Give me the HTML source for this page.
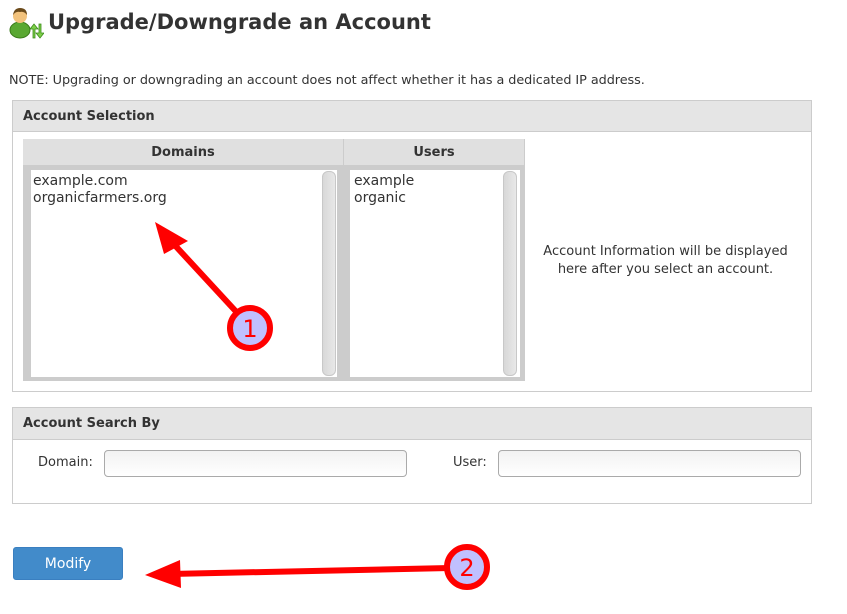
<!DOCTYPE html>
<html><head><meta charset="utf-8"><style>
*{box-sizing:border-box;margin:0;padding:0}
body{width:847px;height:614px;background:#fff;font-family:"DejaVu Sans","Liberation Sans",sans-serif;color:#333;position:relative;overflow:hidden}
.a{position:absolute}
.t{white-space:nowrap}
.panel{border:1px solid #ccc;background:#fff}
.ph{background:#e5e5e5;border-bottom:1px solid #ccc;font-weight:bold;font-size:13px;padding-left:10px}
.inp{border:1px solid #aaa;border-radius:4px;background:linear-gradient(#f2f2f2,#fff)}
.sb{background:linear-gradient(90deg,#d8d8d8,#e8e8e8);border:1px solid #c8c8c8;border-radius:6px}
</style></head><body>
<svg class="a" style="left:8px;top:6px" width="36" height="34" viewBox="0 0 36 34">
<ellipse cx="12" cy="24" rx="10" ry="8" fill="#5aa832" stroke="#3a7a1a"/>
<circle cx="12" cy="10" r="7" fill="#f2c27c"/>
<path d="M5 9 Q6 2 12 2 Q19 2 19 9 Q16 5 12 6 Q8 5 5 9Z" fill="#6b4a1a"/>
<path d="M25 32 V23 H22 L26 18 L30 23 H27 V32Z" fill="#7fd04a" stroke="#3a8a1a" stroke-width=".8"/>
<path d="M31 18 V27 H28 L32 32 L36 27 H33 V18Z" fill="#7fd04a" stroke="#3a8a1a" stroke-width=".8"/>
</svg>
<div class="a t" style="left:48px;top:10px;font-size:21px;font-weight:bold;color:#333">Upgrade/Downgrade an Account</div>
<div class="a t" style="left:9px;top:73px;font-size:12.8px;letter-spacing:-0.05px">NOTE: Upgrading or downgrading an account does not affect whether it has a dedicated IP address.</div>

<div class="a panel" style="left:12px;top:100px;width:800px;height:292px">
<div class="ph" style="height:31px;line-height:31px">Account Selection</div>
</div>
<div class="a" style="left:23px;top:139px;width:502px;height:242px;background:#ccc"></div>
<div class="a" style="left:23px;top:139px;width:320px;height:26px;background:#e0e0e0;font-size:13px;font-weight:bold;text-align:center;line-height:27px">Domains</div>
<div class="a" style="left:344px;top:139px;width:180px;height:26px;background:#e0e0e0;font-size:13px;font-weight:bold;text-align:center;line-height:27px">Users</div>
<div class="a" style="left:31px;top:170px;width:306px;height:207px;background:#fff;font-size:14px;line-height:17px;padding:3px 0 0 2px">example.com<br>organicfarmers.org</div>
<div class="a sb" style="left:322px;top:171px;width:14px;height:205px"></div>
<div class="a" style="left:350px;top:170px;width:170px;height:207px;background:#fff;font-size:14px;line-height:17px;padding:3px 0 0 4px">example<br>organic</div>
<div class="a sb" style="left:503px;top:171px;width:14px;height:205px"></div>
<div class="a" style="left:523px;top:243px;width:285px;text-align:center;font-size:13px;line-height:18px">Account Information will be displayed<br>here after you select an account.</div>

<div class="a panel" style="left:12px;top:407px;width:800px;height:97px">
<div class="ph" style="height:32px;line-height:32px">Account Search By</div>
</div>
<div class="a t" style="left:38px;top:455px;font-size:13px">Domain:</div>
<div class="a inp" style="left:104px;top:450px;width:303px;height:27px"></div>
<div class="a t" style="left:453px;top:455px;font-size:13px">User:</div>
<div class="a inp" style="left:498px;top:450px;width:303px;height:27px"></div>

<div class="a" style="left:13px;top:547px;width:110px;height:33px;background:#428bca;border:1px solid #3a7fc0;border-radius:3px;color:#fff;font-size:14px;text-align:center;line-height:33px">Modify</div>

<svg class="a" style="left:0;top:0" width="847" height="614">
<line x1="242" y1="318" x2="170" y2="240" stroke="#f00" stroke-width="6"/>
<polygon points="155,222 188,241 164,254" fill="#f00"/>
<circle cx="250" cy="328" r="20" fill="#c0c0ff" stroke="#f00" stroke-width="6"/>
<text x="250" y="337" font-size="24" text-anchor="middle" fill="#f00" font-family="DejaVu Sans,sans-serif">1</text>
<line x1="450" y1="568" x2="170" y2="574" stroke="#f00" stroke-width="6"/>
<polygon points="145,575 180,560 181,588" fill="#f00"/>
<circle cx="467" cy="567" r="20" fill="#c0c0ff" stroke="#f00" stroke-width="6"/>
<text x="467" y="576" font-size="24" text-anchor="middle" fill="#f00" font-family="DejaVu Sans,sans-serif">2</text>
</svg>
</body></html>
